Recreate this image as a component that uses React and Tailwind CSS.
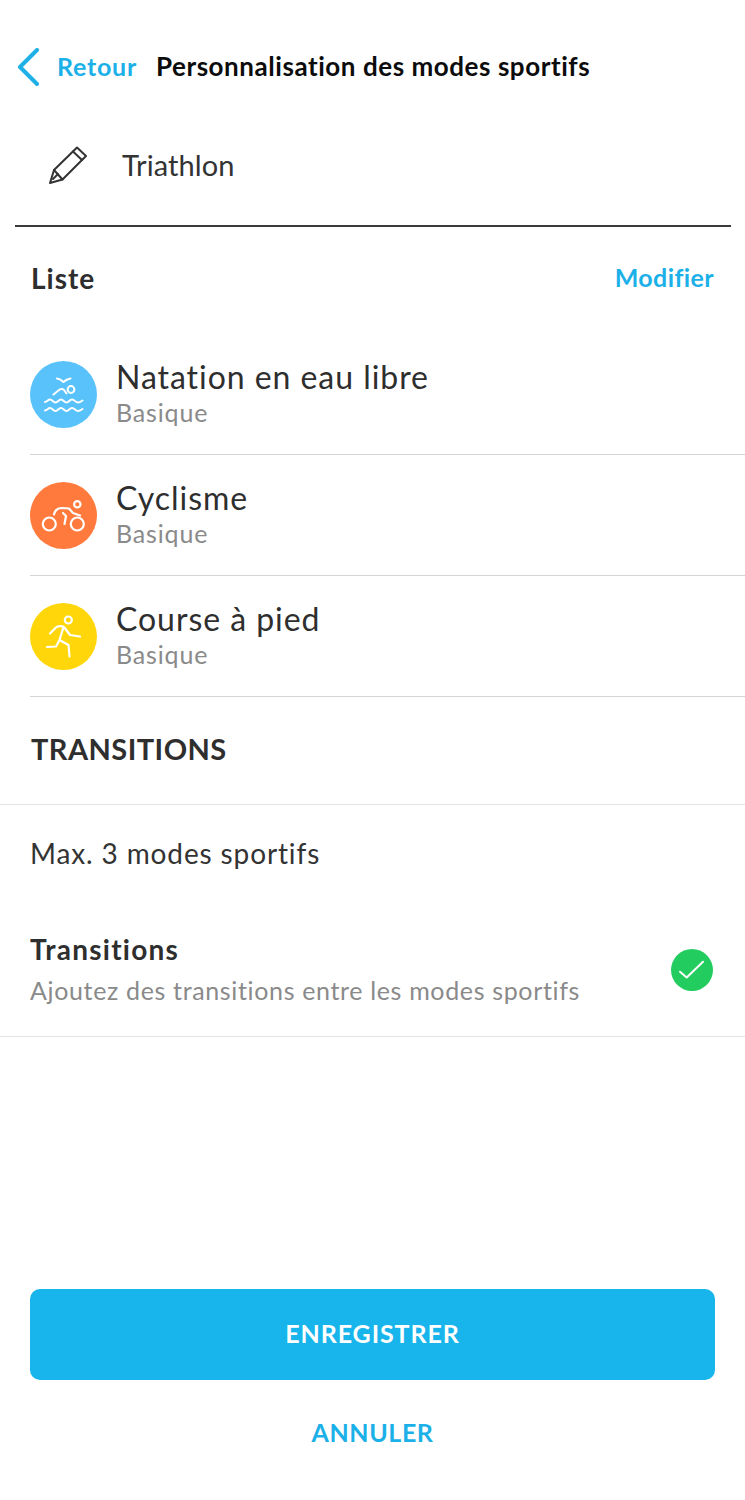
import React from "react";

const font = "font-['Lato','Inter',sans-serif]";

function SwimIcon() {
  return (
    <svg viewBox="0 0 67 67" className="w-[67px] h-[67px]" fill="none" stroke="white" strokeWidth="2" strokeLinecap="round" strokeLinejoin="round">
      <path d="M27 17.5 C30 18 32 19.5 33.5 21 C35 19.5 37.5 18 40.5 17.5" />
      <circle cx="41" cy="28.5" r="3.4" />
      <path d="M23.5 33.5 L29 29 C31 27.5 32.5 27.5 34 29 L36.5 32.5" />
      <path d="M15 41 C17 41 18 38.5 20 38.5 C22.5 38.5 23 41.5 25.5 41.5 C28 41.5 28.5 38.5 31 38.5 C33.5 38.5 34 41.5 36.5 41.5 C39 41.5 39.5 38.5 42 38.5 C44.5 38.5 45.5 41.5 48 41.5 C50 41.5 51 40.5 52.5 39.5" />
      <path d="M15 49.5 C17 49.5 18 47 20 47 C22.5 47 23 50 25.5 50 C28 50 28.5 47 31 47 C33.5 47 34 50 36.5 50 C39 50 39.5 47 42 47 C44.5 47 45.5 50 48 50 C50 50 51 49 52.5 48" />
    </svg>
  );
}

function BikeIcon() {
  return (
    <svg viewBox="0 0 67 67" className="w-[67px] h-[67px]" fill="none" stroke="white" strokeWidth="2.2" strokeLinecap="round" strokeLinejoin="round">
      <circle cx="47.3" cy="22.3" r="3.2" />
      <circle cx="19.3" cy="42" r="6.5" />
      <circle cx="47.3" cy="42" r="6.5" />
      <path d="M24 32.5 C25 28 28 26 32 26 L39 26.5 L43 31 L50 33.5" />
      <path d="M33 31 L36 34 L34.5 42" />
    </svg>
  );
}

function RunIcon() {
  return (
    <svg viewBox="0 0 67 67" className="w-[67px] h-[67px]" fill="none" stroke="white" strokeWidth="2.2" strokeLinecap="round" strokeLinejoin="round">
      <circle cx="38.3" cy="17" r="3.5" />
      <path d="M20 30.5 L26.5 24 C29 23 32 23 34 24 L40 32 L50 33.5" />
      <path d="M33.5 24 L29.5 37 L38.5 42 L39.5 53.5" />
      <path d="M29 38 L26 43.5 L17 44" />
    </svg>
  );
}

function SportRow({ icon, bg, title }) {
  return (
    <div className="h-[121px] ml-[30px] border-b border-[#d4d4d4] flex items-center gap-[19px]">
      <div className={`w-[67px] h-[67px] rounded-full shrink-0 ${bg}`}>{icon}</div>
      <div className="pb-[2px]">
        <div className="text-[32px] leading-[38px] text-[#2e2e2e] tracking-[0.95px]">{title}</div>
        <div className="text-[25px] leading-[33px] text-[#8a8a8a] tracking-[0.85px]">Basique</div>
      </div>
    </div>
  );
}

export default function App() {
  return (
    <div className={`w-[745px] h-[1500px] bg-white flex flex-col ${font}`}>
      <div className="h-[132px] pl-[17px] flex items-center pt-[1px]">
        <svg viewBox="0 0 22 38" className="w-[22px] h-[38px]" fill="none" stroke="#1fb0e6" strokeWidth="4" strokeLinecap="round" strokeLinejoin="round">
          <path d="M20 2 L3 19 L20 36" />
        </svg>
        <span className="ml-[18px] text-[25px] font-bold text-[#1cb0e8] tracking-[0.75px]">Retour</span>
        <span className="ml-[19px] text-[26px] font-bold text-[#0c0c0c] tracking-[0.55px]">Personnalisation des modes sportifs</span>
      </div>

      <div className="h-[95px] ml-[15px] mr-[14px] border-b-2 border-[#3a3a3a] flex items-center pb-[28px]">
        <svg viewBox="0 0 38 38" className="ml-[34px] w-[38px] h-[38px]" fill="none" stroke="#333" strokeWidth="2" strokeLinejoin="round" strokeLinecap="round">
          <path d="M1 37 L5 24 L28 1.5 L37 10 L13.5 33.5 Z" />
          <path d="M5 24 L13.5 33.5" />
          <path d="M24 5.5 L33 14" />
          <path d="M9 28 L4 33" />
        </svg>
        <span className="ml-[35px] text-[29px] text-[#333333] tracking-[0.1px]">Triathlon</span>
      </div>

      <div className="h-[107px] px-[31px] flex items-center justify-between pb-[5px]">
        <span className="text-[28px] font-bold text-[#2e2e2e] tracking-[1px]">Liste</span>
        <span className="text-[25px] font-bold text-[#1cb0e8] tracking-[0.4px]">Modifier</span>
      </div>

      <SportRow icon={<SwimIcon />} bg="bg-[#5ac2fa]" title="Natation en eau libre" />
      <SportRow icon={<BikeIcon />} bg="bg-[#ff7a3c]" title="Cyclisme" />
      <SportRow icon={<RunIcon />} bg="bg-[#ffd60a]" title="Course à pied" />

      <div className="h-[108px] px-[31px] border-b border-[#e4e4e4] flex items-center pb-[4px]">
        <span className="text-[29px] font-bold text-[#2e2e2e] tracking-[0.45px]">TRANSITIONS</span>
      </div>

      <div className="h-[96px] pl-[30px] flex items-center">
        <span className="text-[28px] text-[#333333] tracking-[0.87px]">Max. 3 modes sportifs</span>
      </div>

      <div className="h-[136px] pl-[30px] pr-[32px] border-b border-[#e4e4e4] flex items-center justify-between pt-[2px]">
        <div className="pb-[2px]">
          <div className="text-[28px] leading-[36px] font-bold text-[#2e2e2e] tracking-[1.25px]">Transitions</div>
          <div className="mt-[6px] text-[25px] leading-[34px] text-[#8a8a8a] tracking-[0.65px]">Ajoutez des transitions entre les modes sportifs</div>
        </div>
        <div className="w-[42px] h-[42px] rounded-full bg-[#22cc5e]">
          <svg viewBox="0 0 42 42" className="w-[42px] h-[42px]" fill="none" stroke="white" strokeWidth="2" strokeLinecap="round" strokeLinejoin="round">
            <path d="M9 22.7 L15.7 28.5 L32 12.7" />
          </svg>
        </div>
      </div>

      <div className="mt-[252px] mx-[30px] h-[91px] rounded-[10px] bg-[#18b4ec] flex items-center justify-center pb-[2px]">
        <span className="text-[25px] font-bold text-white tracking-[0.9px]">ENREGISTRER</span>
      </div>
      <div className="mt-[34px] text-center text-[25px] font-bold text-[#1cb0e8] tracking-[0.6px]">ANNULER</div>
    </div>
  );
}
